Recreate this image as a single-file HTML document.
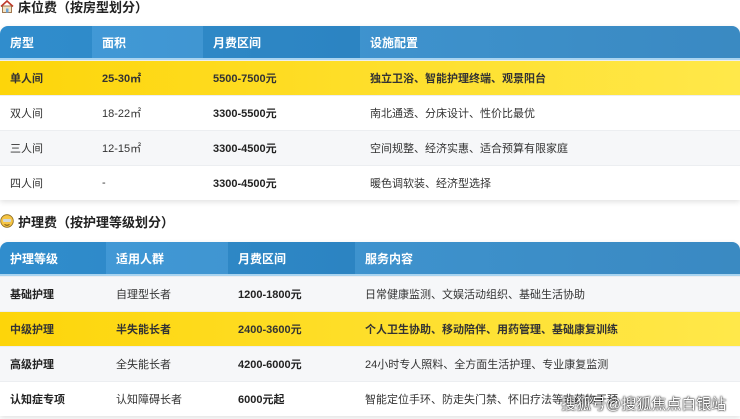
<!DOCTYPE html>
<html><head><meta charset="utf-8"><style>
*{margin:0;padding:0;box-sizing:border-box}
body{width:740px;height:419px;overflow:hidden;background:#fff;font-family:"Liberation Sans","Noto Sans CJK SC",sans-serif;color:#333;font-size:11px;position:relative}
.title{position:absolute;left:0;font-size:13px;font-weight:bold;color:#222;display:flex;align-items:center;gap:4px;height:14px}
.tbl{position:absolute;left:0;width:740px;border-radius:8px 8px 0 0;overflow:hidden;box-shadow:0 2px 6px rgba(0,0,0,.12)}
.row{display:flex;height:35px;align-items:center}
.row div{height:100%;display:flex;align-items:center;padding-left:10px}
.hd{background:linear-gradient(90deg,#3293d6,#2a80bd);color:#fff;font-weight:bold;font-size:12px;height:34px;border-bottom:2px solid #a9d4f0}
.hd div:nth-child(even){background:rgba(255,255,255,.08)}
.hd div:nth-child(odd){background:rgba(0,0,0,.04)}
.y{background:linear-gradient(90deg,#fdd50a,#ffe84a);color:#333;font-weight:bold}
.w{background:#fff}
.g{background:#f6f7f9}
.row+.row{border-top:1px solid #eceef1}
b{font-weight:bold;color:#222}
</style></head><body>
<div class="title" style="top:-1px"><svg width="14" height="13" viewBox="0 0 14 13"><path d="M1 6.5L7 1l6 5.5" fill="none" stroke="#c0392b" stroke-width="1.6"/><rect x="2.5" y="6" width="9" height="6.5" fill="#f2e2c4" stroke="#8b5a2b" stroke-width=".8"/><rect x="6" y="8.5" width="2.5" height="4" fill="#6fa8dc"/></svg>床位费（按房型划分）</div>
<div class="tbl" style="top:26px">
<div class="row hd"><div style="width:92px">房型</div><div style="width:111px">面积</div><div style="width:157px">月费区间</div><div style="flex:1">设施配置</div></div>
<div class="row y"><div style="width:92px">单人间</div><div style="width:111px">25-30㎡</div><div style="width:157px">5500-7500元</div><div style="flex:1">独立卫浴、智能护理终端、观景阳台</div></div>
<div class="row w"><div style="width:92px">双人间</div><div style="width:111px">18-22㎡</div><div style="width:157px"><b>3300-5500元</b></div><div style="flex:1">南北通透、分床设计、性价比最优</div></div>
<div class="row g"><div style="width:92px">三人间</div><div style="width:111px">12-15㎡</div><div style="width:157px"><b>3300-4500元</b></div><div style="flex:1">空间规整、经济实惠、适合预算有限家庭</div></div>
<div class="row w"><div style="width:92px">四人间</div><div style="width:111px">-</div><div style="width:157px"><b>3300-4500元</b></div><div style="flex:1">暖色调软装、经济型选择</div></div>
</div>
<div class="title" style="top:214px"><svg width="14" height="14" viewBox="0 0 14 14"><circle cx="7" cy="7" r="6.3" fill="#f6c544" stroke="#8a6a20" stroke-width=".8"/><rect x="3" y="5" width="8" height="3" rx="1" fill="#cfd8dc"/><path d="M4.5 10.5q2.5 1.5 5 0" stroke="#6b4a10" fill="none"/></svg>护理费（按护理等级划分）</div>
<div class="tbl" style="top:242px">
<div class="row hd"><div style="width:106px">护理等级</div><div style="width:122px">适用人群</div><div style="width:127px">月费区间</div><div style="flex:1">服务内容</div></div>
<div class="row g"><div style="width:106px"><b>基础护理</b></div><div style="width:122px">自理型长者</div><div style="width:127px"><b>1200-1800元</b></div><div style="flex:1">日常健康监测、文娱活动组织、基础生活协助</div></div>
<div class="row y"><div style="width:106px">中级护理</div><div style="width:122px">半失能长者</div><div style="width:127px">2400-3600元</div><div style="flex:1">个人卫生协助、移动陪伴、用药管理、基础康复训练</div></div>
<div class="row g"><div style="width:106px"><b>高级护理</b></div><div style="width:122px">全失能长者</div><div style="width:127px"><b>4200-6000元</b></div><div style="flex:1">24小时专人照料、全方面生活护理、专业康复监测</div></div>
<div class="row w"><div style="width:106px"><b>认知症专项</b></div><div style="width:122px">认知障碍长者</div><div style="width:127px"><b>6000元起</b></div><div style="flex:1">智能定位手环、防走失门禁、怀旧疗法等非药物干预</div></div>
</div>
<div style="position:absolute;left:561px;top:393px;font-size:15px;color:#fff;text-shadow:0 0 2px #000,0 0 1px #000">搜狐号@搜狐焦点白银站</div>
</body></html>
